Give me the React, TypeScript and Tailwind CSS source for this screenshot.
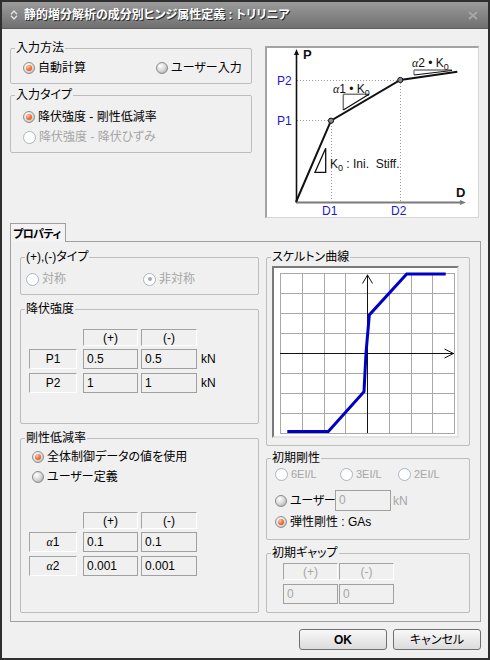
import React from 'react';

type RadioKind = 'on' | 'off' | 'disabled' | 'disabledOn';

// Windows-classic style radio button
const Radio: React.FC<{ kind: RadioKind }> = ({ kind }) => {
  if (kind === 'on') {
    return (
      <span className="flex h-[12px] w-[12px] shrink-0 items-center justify-center rounded-full border border-[#8f8f8f] bg-[radial-gradient(circle_at_35%_30%,#ffffff_0%,#d8d8d8_60%,#a8a8a8_100%)]">
        <span className="h-[6px] w-[6px] rounded-full bg-[radial-gradient(circle_at_35%_30%,#ffc8a4_0%,#f2733c_50%,#d63f0c_100%)]" />
      </span>
    );
  }
  if (kind === 'off') {
    return (
      <span className="h-[12px] w-[12px] shrink-0 rounded-full border border-[#8a8a8a] bg-[radial-gradient(circle_at_35%_30%,#ffffff_0%,#d4d4d4_55%,#989898_100%)]" />
    );
  }
  return (
    <span className="flex h-[13px] w-[13px] shrink-0 items-center justify-center rounded-full border border-[#a9b4c6] bg-white">
      {kind === 'disabledOn' && <span className="h-[4px] w-[4px] rounded-full bg-[#a4a9b2]" />}
    </span>
  );
};

const Option: React.FC<{ kind: RadioKind; label: React.ReactNode; className?: string; small?: boolean }> = ({
  kind,
  label,
  className = '',
  small = false,
}) => {
  const dim = kind === 'disabled' || kind === 'disabledOn';
  return (
    <div className={`flex h-[14px] items-center gap-[3px] whitespace-nowrap ${className}`}>
      <Radio kind={kind} />
      <span className={`${dim ? 'text-[#a6a6a6]' : 'text-black'} ${small ? 'text-[11px]' : ''}`}>{label}</span>
    </div>
  );
};

const Group: React.FC<{ title: string; className?: string; children: React.ReactNode }> = ({
  title,
  className = '',
  children,
}) => (
  <fieldset className={`rounded-[2px] border border-[#bdbdbd] ${className}`}>
    <legend className="ml-[4px] px-[1px] leading-[14px] whitespace-nowrap">{title}</legend>
    {children}
  </fieldset>
);

// etched header / label cell
const Etched: React.FC<{ className?: string; children: React.ReactNode }> = ({ className = '', children }) => (
  <div
    className={`flex items-center justify-center border border-t-[#a3a3a3] border-l-[#a3a3a3] border-r-white border-b-white ${className}`}
  >
    {children}
  </div>
);

const Field: React.FC<{ className?: string; children: React.ReactNode }> = ({ className = '', children }) => (
  <div className={`h-[20px] border border-[#a0a0a0] bg-[#f0f0f0] pl-[3px] pt-[2px] leading-[14px] ${className}`}>
    {children}
  </div>
);

const Alpha: React.FC<{ n: string }> = ({ n }) => (
  <span>
    <span className="italic [font-family:'Liberation_Serif',serif]">α</span>
    {n}
  </span>
);

const TitleBar = () => (
  <div className="flex h-[29px] shrink-0 items-center border-t-2 border-b border-t-[#2f2f2f] border-b-[#5e5e5e] bg-linear-to-b from-[#9b9b9b] to-[#707070]">
    <svg width="8" height="10" viewBox="0 0 8 10" className="ml-[8px]">
      <path d="M1 4.2 L4 1 L7 4.2" stroke="#e4e4e4" strokeWidth="1.3" fill="none" />
      <path d="M1 5.8 L4 9 L7 5.8" stroke="#e4e4e4" strokeWidth="1.3" fill="none" />
    </svg>
    <span className="ml-[6px] whitespace-nowrap font-bold text-white [text-shadow:1px_1px_0_#2a2a2a]">
      静的増分解析の成分別ヒンジ属性定義 : トリリニア
    </span>
    <svg width="10" height="9" viewBox="0 0 10 9" className="ml-auto mr-[10px]">
      <path d="M1 1 L9 8 M9 1 L1 8" stroke="#a6a6a6" strokeWidth="2" />
    </svg>
  </div>
);

const Diagram = () => (
  <div className="h-[172px] w-[214px] border-t-2 border-l-2 border-r border-b border-t-[#a3a3a3] border-l-[#a3a3a3] border-r-[#d6d6d6] border-b-[#d6d6d6] bg-white">
    <svg width="211" height="169" viewBox="0 0 211 169" className="block" fontFamily="'Liberation Sans', Arial, sans-serif">
      <g stroke="#9a9a9a" strokeWidth="1" strokeDasharray="1 2">
        <line x1="30" y1="32.5" x2="133" y2="32.5" />
        <line x1="30" y1="72.5" x2="64" y2="72.5" />
        <line x1="64.5" y1="75" x2="64.5" y2="153" />
        <line x1="133.5" y1="35" x2="133.5" y2="153" />
      </g>
      <line x1="29.5" y1="155" x2="29.5" y2="5" stroke="#111" strokeWidth="1.6" />
      <path d="M27 7 L29.5 1 L32 7 Z" fill="#111" />
      <line x1="29" y1="154.5" x2="195" y2="154.5" stroke="#7a7a7a" strokeWidth="2" />
      <path d="M193 152 L199 154.5 L193 157 Z" fill="#7a7a7a" />
      <polyline points="29,154 64,72.7 133.3,32 190.3,23.7" fill="none" stroke="#111" strokeWidth="2" />
      <circle cx="64" cy="72.7" r="2.6" fill="#8a8a8a" stroke="#111" strokeWidth="1" />
      <circle cx="133.3" cy="32" r="2.6" fill="#8a8a8a" stroke="#111" strokeWidth="1" />
      <path d="M48 124.3 L58.7 100.3 L58.7 124.3 Z" fill="none" stroke="#111" strokeWidth="1.3" />
      <path d="M76.3 46.3 L102 46.3 M76.3 46.3 L76.3 62" stroke="#7a7a7a" strokeWidth="1.5" fill="none" />
      <path d="M76.3 62 L102 46.3" stroke="#111" strokeWidth="1.3" />
      <path d="M147 22 L185 22 M147 22 L147 27" stroke="#7a7a7a" strokeWidth="1.3" fill="none" />
      <path d="M147 27 L185 22.5" stroke="#111" strokeWidth="1.2" />
      <text x="36" y="11" fontSize="13" fontWeight="bold" fill="#111">P</text>
      <text x="189" y="149" fontSize="13" fontWeight="bold" fill="#111">D</text>
      <text x="10" y="37" fontSize="12" fill="#1818d0">P2</text>
      <text x="10" y="77" fontSize="12" fill="#1818d0">P1</text>
      <text x="55" y="167" fontSize="12" fill="#1818d0">D1</text>
      <text x="124" y="167" fontSize="12" fill="#1818d0">D2</text>
      <text x="63" y="120" fontSize="12" fill="#111">
        K<tspan fontSize="9" dy="3">0</tspan>
        <tspan dy="-3">{'\u00a0:\u00a0Ini.\u00a0\u00a0Stiff.'}</tspan>
      </text>
      <text x="66" y="45" fontSize="12" fill="#111">
        <tspan fontStyle="italic" fontFamily="'Liberation Serif', serif">α</tspan>
        {'1\u00a0•\u00a0K'}
        <tspan fontSize="9" dy="3">0</tspan>
      </text>
      <text x="145" y="19" fontSize="12" fill="#111">
        <tspan fontStyle="italic" fontFamily="'Liberation Serif', serif">α</tspan>
        {'2\u00a0•\u00a0K'}
        <tspan fontSize="9" dy="3">0</tspan>
      </text>
    </svg>
  </div>
);

const gridX = [6, 28, 50, 71, 93, 115, 137, 158, 180];
const gridY = [5, 25, 45, 65, 85, 105, 125, 145, 165];

const SkeletonChart = () => (
  <div className="h-[172px] w-[187px] border-2 border-t-[#7a7a7a] border-l-[#7a7a7a] border-r-[#e4e4e4] border-b-[#e4e4e4] bg-white">
    <svg width="183" height="168" viewBox="0 0 183 168" className="block">
      {gridX.map(x => (
        <line key={`x${x}`} x1={x + 0.5} y1={5} x2={x + 0.5} y2={166} stroke="#a8a8a8" />
      ))}
      {gridY.map(y => (
        <line key={`y${y}`} x1={6} y1={y + 0.5} x2={181} y2={y + 0.5} stroke="#a8a8a8" />
      ))}
      <line x1="93.5" y1="7" x2="93.5" y2="165" stroke="#111" />
      <line x1="6" y1="85.5" x2="180" y2="85.5" stroke="#111" />
      <path d="M88.5 15.5 L93.5 7 L98.5 15.5" stroke="#111" fill="none" />
      <path d="M170.5 81 L179.5 85.5 L170.5 90" stroke="#111" fill="none" />
      <polyline
        points="13.3,163.5 54.3,163.5 90,123.7 92,85 95.3,47 132.7,6 171.7,6"
        fill="none"
        stroke="#0000c4"
        strokeWidth="3"
      />
    </svg>
  </div>
);

const App: React.FC = () => {
  return (
    <div className="flex h-[660px] w-[490px] flex-col border-x-2 border-b-2 border-[#2f2f2f] bg-[#f0f0f0] text-[12px] leading-[14px] text-black [font-family:'Liberation_Sans','Noto_Sans_CJK_JP',sans-serif] [font-feature-settings:'palt']">
      <TitleBar />

      {/* top: input method / type + diagram */}
      <div className="flex px-2">
        <div className="mt-[12px] flex w-[242px] flex-col">
          <Group title="入力方法">
            <div className="flex pt-[6px] pb-[8px] pl-[12px]">
              <Option kind="on" label="自動計算" className="w-[133px]" />
              <Option kind="off" label="ユーザー入力" />
            </div>
          </Group>
          <Group title="入力タイプ" className="mt-[4px]">
            <div className="flex flex-col gap-[6px] pt-[8px] pb-[8px] pl-[12px]">
              <Option kind="on" label="降伏強度 - 剛性低減率" />
              <Option kind="disabled" label="降伏強度 - 降伏ひずみ" />
            </div>
          </Group>
        </div>
        <div className="ml-[13px] mt-[17px]">
          <Diagram />
        </div>
      </div>

      {/* property tab */}
      <div className="mt-[5px] flex flex-col px-2">
        <div className="relative z-10 -mb-px flex h-[19px] w-[56px] items-center whitespace-nowrap border-x border-t border-[#a0a0a0] bg-[#f3f3f3] pl-[2px] pt-[2px] text-[11px] font-bold tracking-[-0.6px]">
          プロパティ
        </div>
        <div className="flex h-[381px] w-[471px] border border-[#a0a0a0] pl-[9px] pt-[8px]">
          {/* left column */}
          <div className="flex w-[239px] flex-col">
            <Group title="(+),(-)タイプ">
              <div className="flex pt-[8px] pb-[8px] pl-[5px]">
                <Option kind="disabled" label="対称" className="w-[117px]" />
                <Option kind="disabledOn" label="非対称" />
              </div>
            </Group>

            <Group title="降伏強度" className="mt-[7px]">
              <div className="flex flex-col pt-[13px] pb-[30px] pl-[8px]">
                <div className="flex">
                  <div className="w-[54px]" />
                  <Etched className="h-[17px] w-[55px]">(+)</Etched>
                  <Etched className="ml-[3px] h-[17px] w-[56px]">(-)</Etched>
                </div>
                <div className="mt-[3px] flex items-center">
                  <Etched className="h-[20px] w-[48px]">P1</Etched>
                  <Field className="ml-[6px] w-[55px]">0.5</Field>
                  <Field className="ml-[3px] w-[56px]">0.5</Field>
                  <span className="ml-[4px]">kN</span>
                </div>
                <div className="mt-[4px] flex items-center">
                  <Etched className="h-[20px] w-[48px]">P2</Etched>
                  <Field className="ml-[6px] w-[55px]">1</Field>
                  <Field className="ml-[3px] w-[56px]">1</Field>
                  <span className="ml-[4px]">kN</span>
                </div>
              </div>
            </Group>

            <Group title="剛性低減率" className="mt-[7px]">
              <div className="flex flex-col gap-[6px] pt-[5px] pl-[11px]">
                <Option kind="on" label="全体制御データの値を使用" />
                <Option kind="off" label="ユーザー定義" />
              </div>
              <div className="flex flex-col pt-[28px] pb-[36px] pl-[8px]">
                <div className="flex">
                  <div className="w-[54px]" />
                  <Etched className="h-[17px] w-[55px]">(+)</Etched>
                  <Etched className="ml-[3px] h-[17px] w-[56px]">(-)</Etched>
                </div>
                <div className="mt-[3px] flex items-center">
                  <Etched className="h-[20px] w-[48px]">
                    <Alpha n="1" />
                  </Etched>
                  <Field className="ml-[6px] w-[55px]">0.1</Field>
                  <Field className="ml-[3px] w-[56px]">0.1</Field>
                </div>
                <div className="mt-[4px] flex items-center">
                  <Etched className="h-[20px] w-[48px]">
                    <Alpha n="2" />
                  </Etched>
                  <Field className="ml-[6px] w-[55px]">0.001</Field>
                  <Field className="ml-[3px] w-[56px]">0.001</Field>
                </div>
              </div>
            </Group>
          </div>

          {/* right column */}
          <div className="ml-[7px] flex w-[204px] flex-col">
            <Group title="スケルトン曲線">
              <div className="pt-[2px] pb-[7px] pl-[5px]">
                <SkeletonChart />
              </div>
            </Group>

            <Group title="初期剛性" className="mt-[5px]">
              <div className="flex flex-col pt-[2px] pb-[10px] pl-[8px]">
                <div className="flex">
                  <Option kind="disabled" label="6EI/L" small className="w-[65px]" />
                  <Option kind="disabled" label="3EI/L" small className="w-[58px]" />
                  <Option kind="disabled" label="2EI/L" small />
                </div>
                <div className="mt-[9px] flex h-[21px] items-center">
                  <Radio kind="off" />
                  <span className="ml-[3px] w-[45px] shrink-0 whitespace-nowrap tracking-[-0.3px]">ユーザー</span>
                  <div className="h-[21px] w-[56px] shrink-0 border border-[#a0a0a0] pl-[3px] pt-[2px] text-[#a6a6a6]">0</div>
                  <span className="ml-[2px] text-[#a6a6a6]">kN</span>
                </div>
                <Option kind="on" label="弾性剛性 : GAs" className="mt-[4px]" />
              </div>
            </Group>

            <Group title="初期ギャップ" className="mt-[6px]">
              <div className="flex flex-col pt-[3px] pb-[8px] pl-[16px]">
                <div className="flex gap-[1px] text-[#a6a6a6]">
                  <Etched className="h-[17px] w-[55px]">(+)</Etched>
                  <Etched className="h-[17px] w-[55px]">(-)</Etched>
                </div>
                <div className="mt-[4px] flex gap-[1px] text-[#a6a6a6]">
                  <Field className="w-[55px]">0</Field>
                  <Field className="w-[55px]">0</Field>
                </div>
              </div>
            </Group>
          </div>
        </div>
      </div>

      {/* dialog buttons */}
      <div className="mt-[7px] flex justify-end gap-[6px] pr-[7px]">
        <button className="h-[21px] w-[88px] rounded-[3px] border border-[#707070] bg-linear-to-b from-[#f8f8f8] to-[#dcdcdc] font-bold">
          OK
        </button>
        <button className="h-[21px] w-[88px] rounded-[3px] border border-[#707070] bg-linear-to-b from-[#f8f8f8] to-[#dcdcdc]">
          キャンセル
        </button>
      </div>
    </div>
  );
};

export default App;
